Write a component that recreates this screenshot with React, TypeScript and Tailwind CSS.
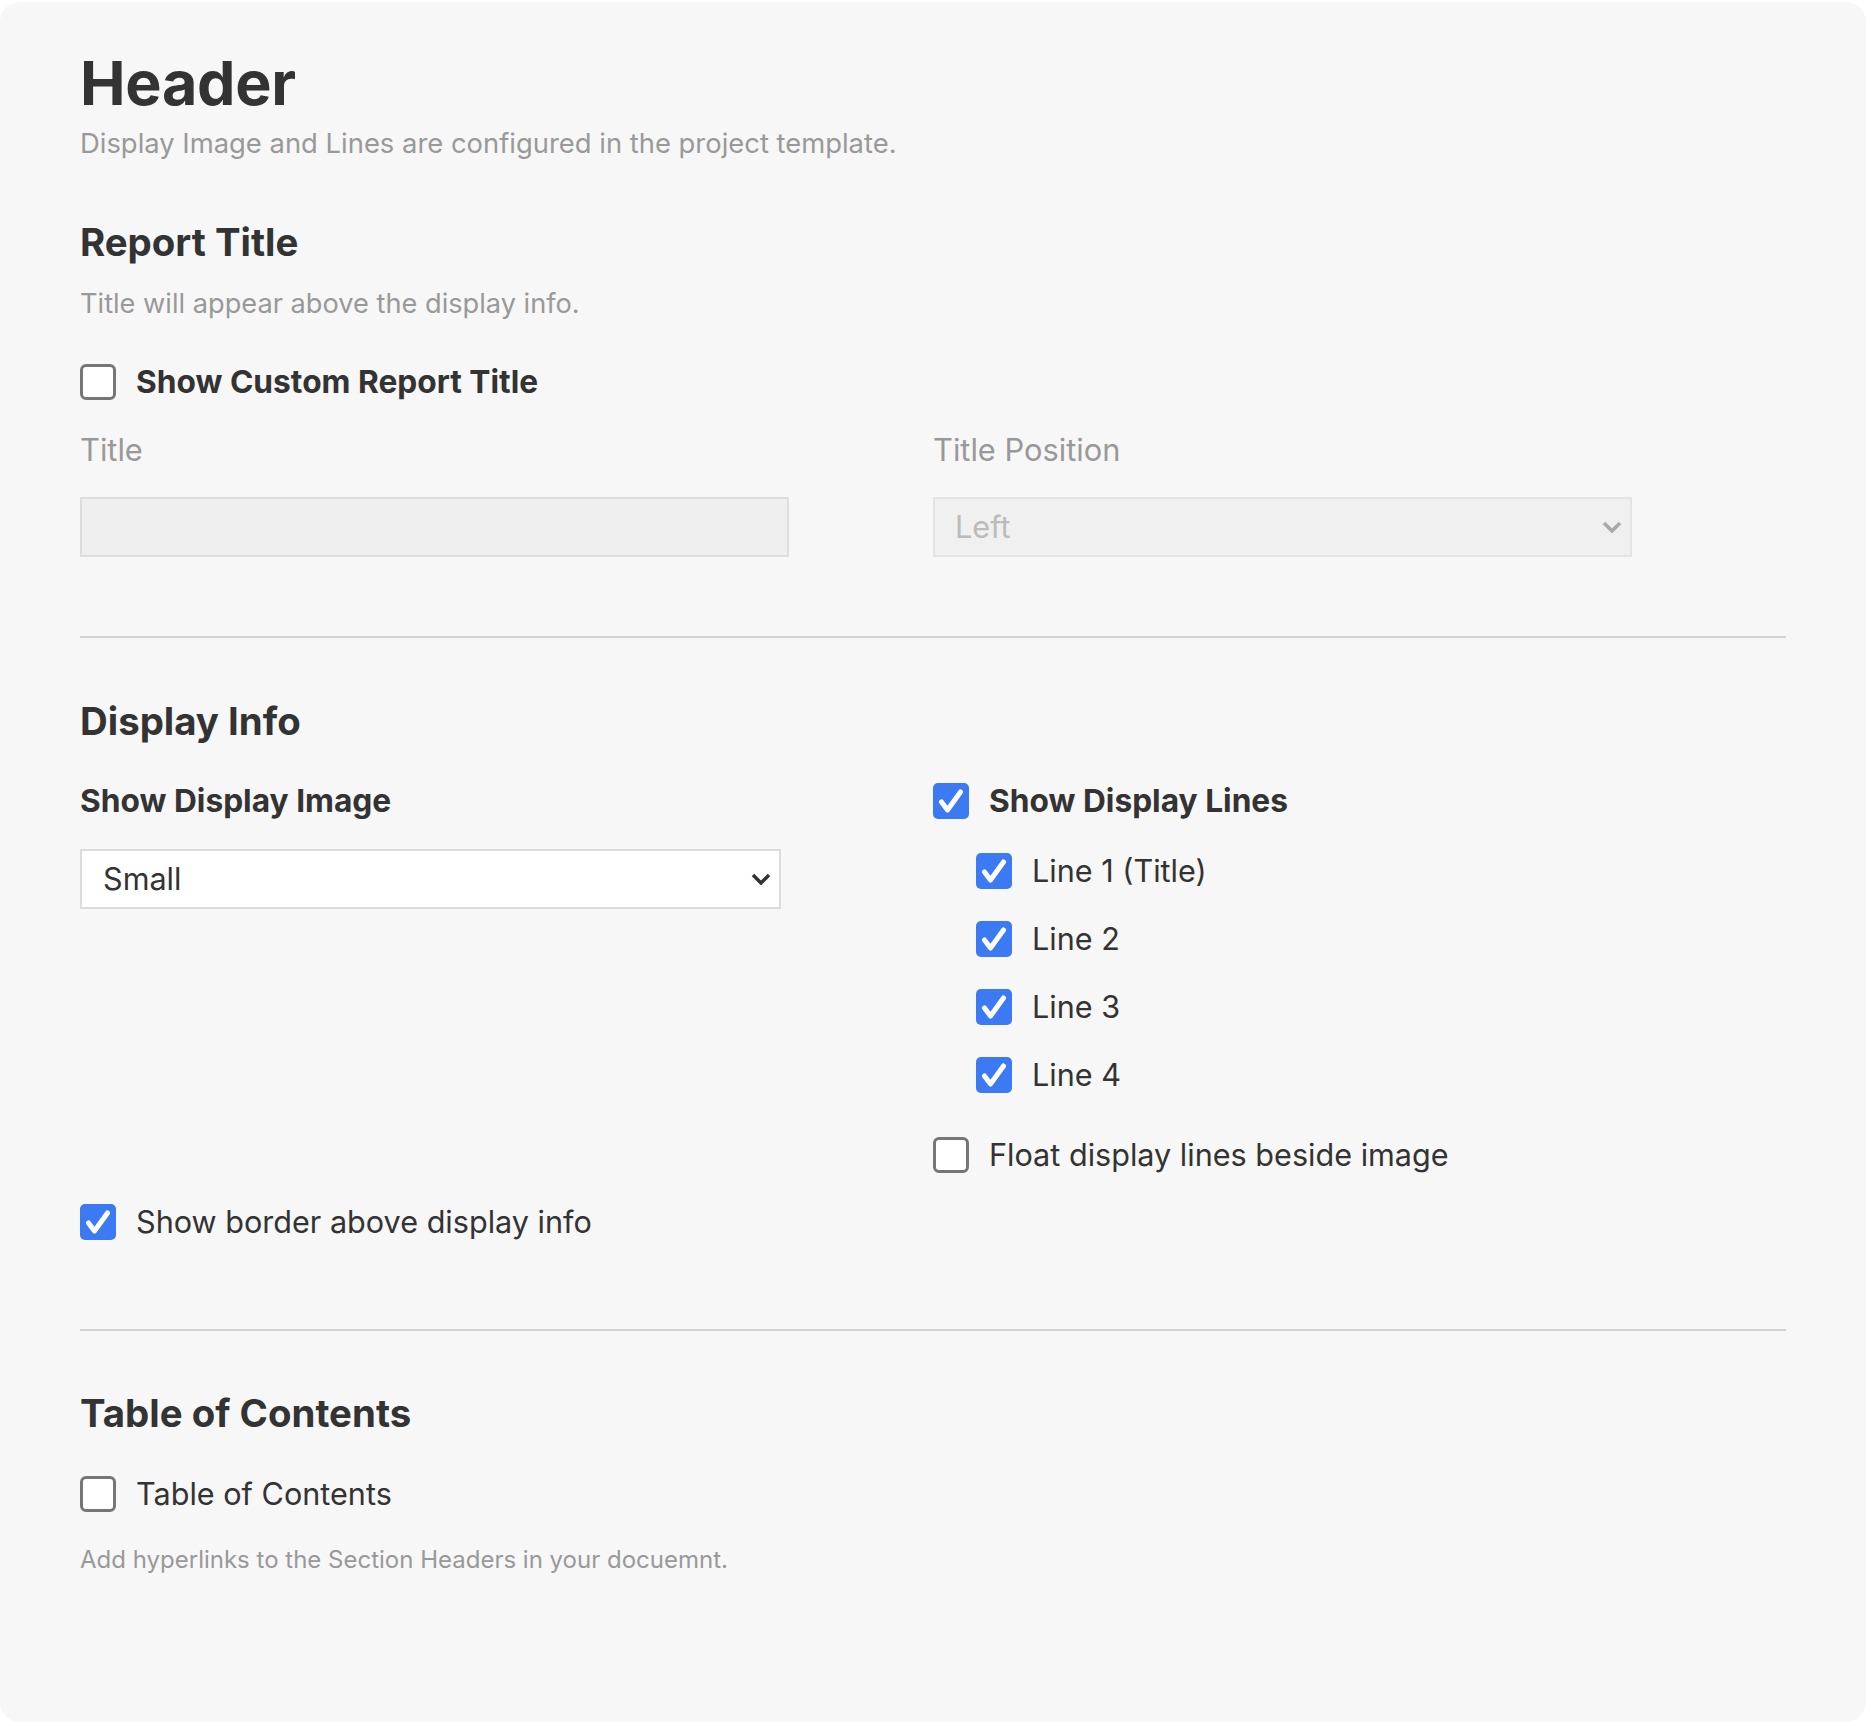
import React from "react"

const font = { fontFamily: "Inter, 'Noto Sans', Arial, sans-serif" }

function Check({ checked }: { checked: boolean }) {
  if (checked) {
    return (
      <span className="flex h-[36px] w-[36px] shrink-0 items-center justify-center rounded-[5px] bg-[#3b7af3]">
        <svg width="36" height="36" viewBox="0 0 36 36" fill="none">
          <path d="M8.5 19 L14.5 27 L27.5 9" stroke="#ffffff" strokeWidth="5" strokeLinecap="round" strokeLinejoin="round" />
        </svg>
      </span>
    )
  }
  return <span className="block h-[36px] w-[36px] shrink-0 rounded-[6px] border-[3px] border-[#767676] bg-white" />
}

function CheckRow({ checked, label, bold = false, className = "" }: { checked: boolean; label: string; bold?: boolean; className?: string }) {
  return (
    <div className={`flex h-[36px] items-center gap-[20px] ${className}`}>
      <Check checked={checked} />
      <span className={`leading-[36px] text-[#333333] ${bold ? "text-[31.7px] font-bold" : "text-[30.6px]"}`}>{label}</span>
    </div>
  )
}

function Chevron({ color }: { color: string }) {
  return (
    <svg width="20" height="12" viewBox="0 0 20 12" fill="none">
      <path d="M2 2 L10 10 L18 2" stroke={color} strokeWidth="3.5" strokeLinejoin="miter" />
    </svg>
  )
}

export default function App() {
  return (
    <div className="min-h-screen bg-white" style={font}>
      <div className="mt-[2px] h-[1720px] w-[1866px] rounded-[20px] bg-[#f7f7f7] px-[80px] pt-[49px]">
        <h1 className="text-[61px] font-bold leading-[64px] tracking-[-0.3px] text-[#333333]">Header</h1>
        <p className="mt-[10px] text-[27.4px] leading-[36px] text-[#999999]">
          Display Image and Lines are configured in the project template.
        </p>

        <h2 className="mt-[57px] text-[38.4px] font-bold leading-[48px] text-[#333333]">Report Title</h2>
        <p className="mt-[20px] text-[27.2px] leading-[36px] text-[#999999]">Title will appear above the display info.</p>
        <CheckRow checked={false} label="Show Custom Report Title" bold className="mt-[42px]" />

        <div className="mt-[32px] grid grid-cols-2">
          <div>
            <div className="text-[30.8px] leading-[36px] text-[#999999]">Title</div>
            <div className="mt-[29px] h-[60px] w-[709px] border-2 border-[#dedede] bg-[#efefef]" />
          </div>
          <div>
            <div className="text-[30.8px] leading-[36px] text-[#999999]">Title Position</div>
            <div className="mt-[29px] flex h-[60px] w-[699px] items-center justify-between border-2 border-[#e4e4e4] bg-[#f0f0f0] pl-[20px] pr-[8px]">
              <span className="text-[30.6px] text-[#bbbbbb]">Left</span>
              <Chevron color="#a9a9a9" />
            </div>
          </div>
        </div>

        <div className="mt-[79px] h-[2px] w-[1706px] bg-[#d2d2d2]" />

        <h2 className="mt-[59px] text-[38.4px] font-bold leading-[48px] text-[#333333]">Display Info</h2>

        <div className="mt-[38px] grid grid-cols-2">
          <div>
            <div className="h-[36px] text-[31.7px] font-bold leading-[36px] text-[#333333]">Show Display Image</div>
            <div className="mt-[30px] flex h-[60px] w-[701px] items-center justify-between border-2 border-[#dcdcdc] bg-white pl-[21px] pr-[8px]">
              <span className="text-[30.6px] text-[#333333]">Small</span>
              <Chevron color="#333333" />
            </div>
          </div>
          <div>
            <CheckRow checked label="Show Display Lines" bold />
            <div className="mt-[34px] flex flex-col gap-[32px] pl-[43px]">
              <CheckRow checked label="Line 1 (Title)" />
              <CheckRow checked label="Line 2" />
              <CheckRow checked label="Line 3" />
              <CheckRow checked label="Line 4" />
            </div>
            <CheckRow checked={false} label="Float display lines beside image" className="mt-[44px]" />
          </div>
        </div>

        <CheckRow checked label="Show border above display info" className="mt-[31px]" />

        <div className="mt-[89px] h-[2px] w-[1706px] bg-[#d2d2d2]" />

        <h2 className="mt-[58px] text-[38.4px] font-bold leading-[48px] text-[#333333]">Table of Contents</h2>
        <CheckRow checked={false} label="Table of Contents" className="mt-[39px]" />
        <p className="mt-[32px] text-[24px] leading-[32px] text-[#999999]">
          Add hyperlinks to the Section Headers in your docuemnt.
        </p>
      </div>
    </div>
  )
}
